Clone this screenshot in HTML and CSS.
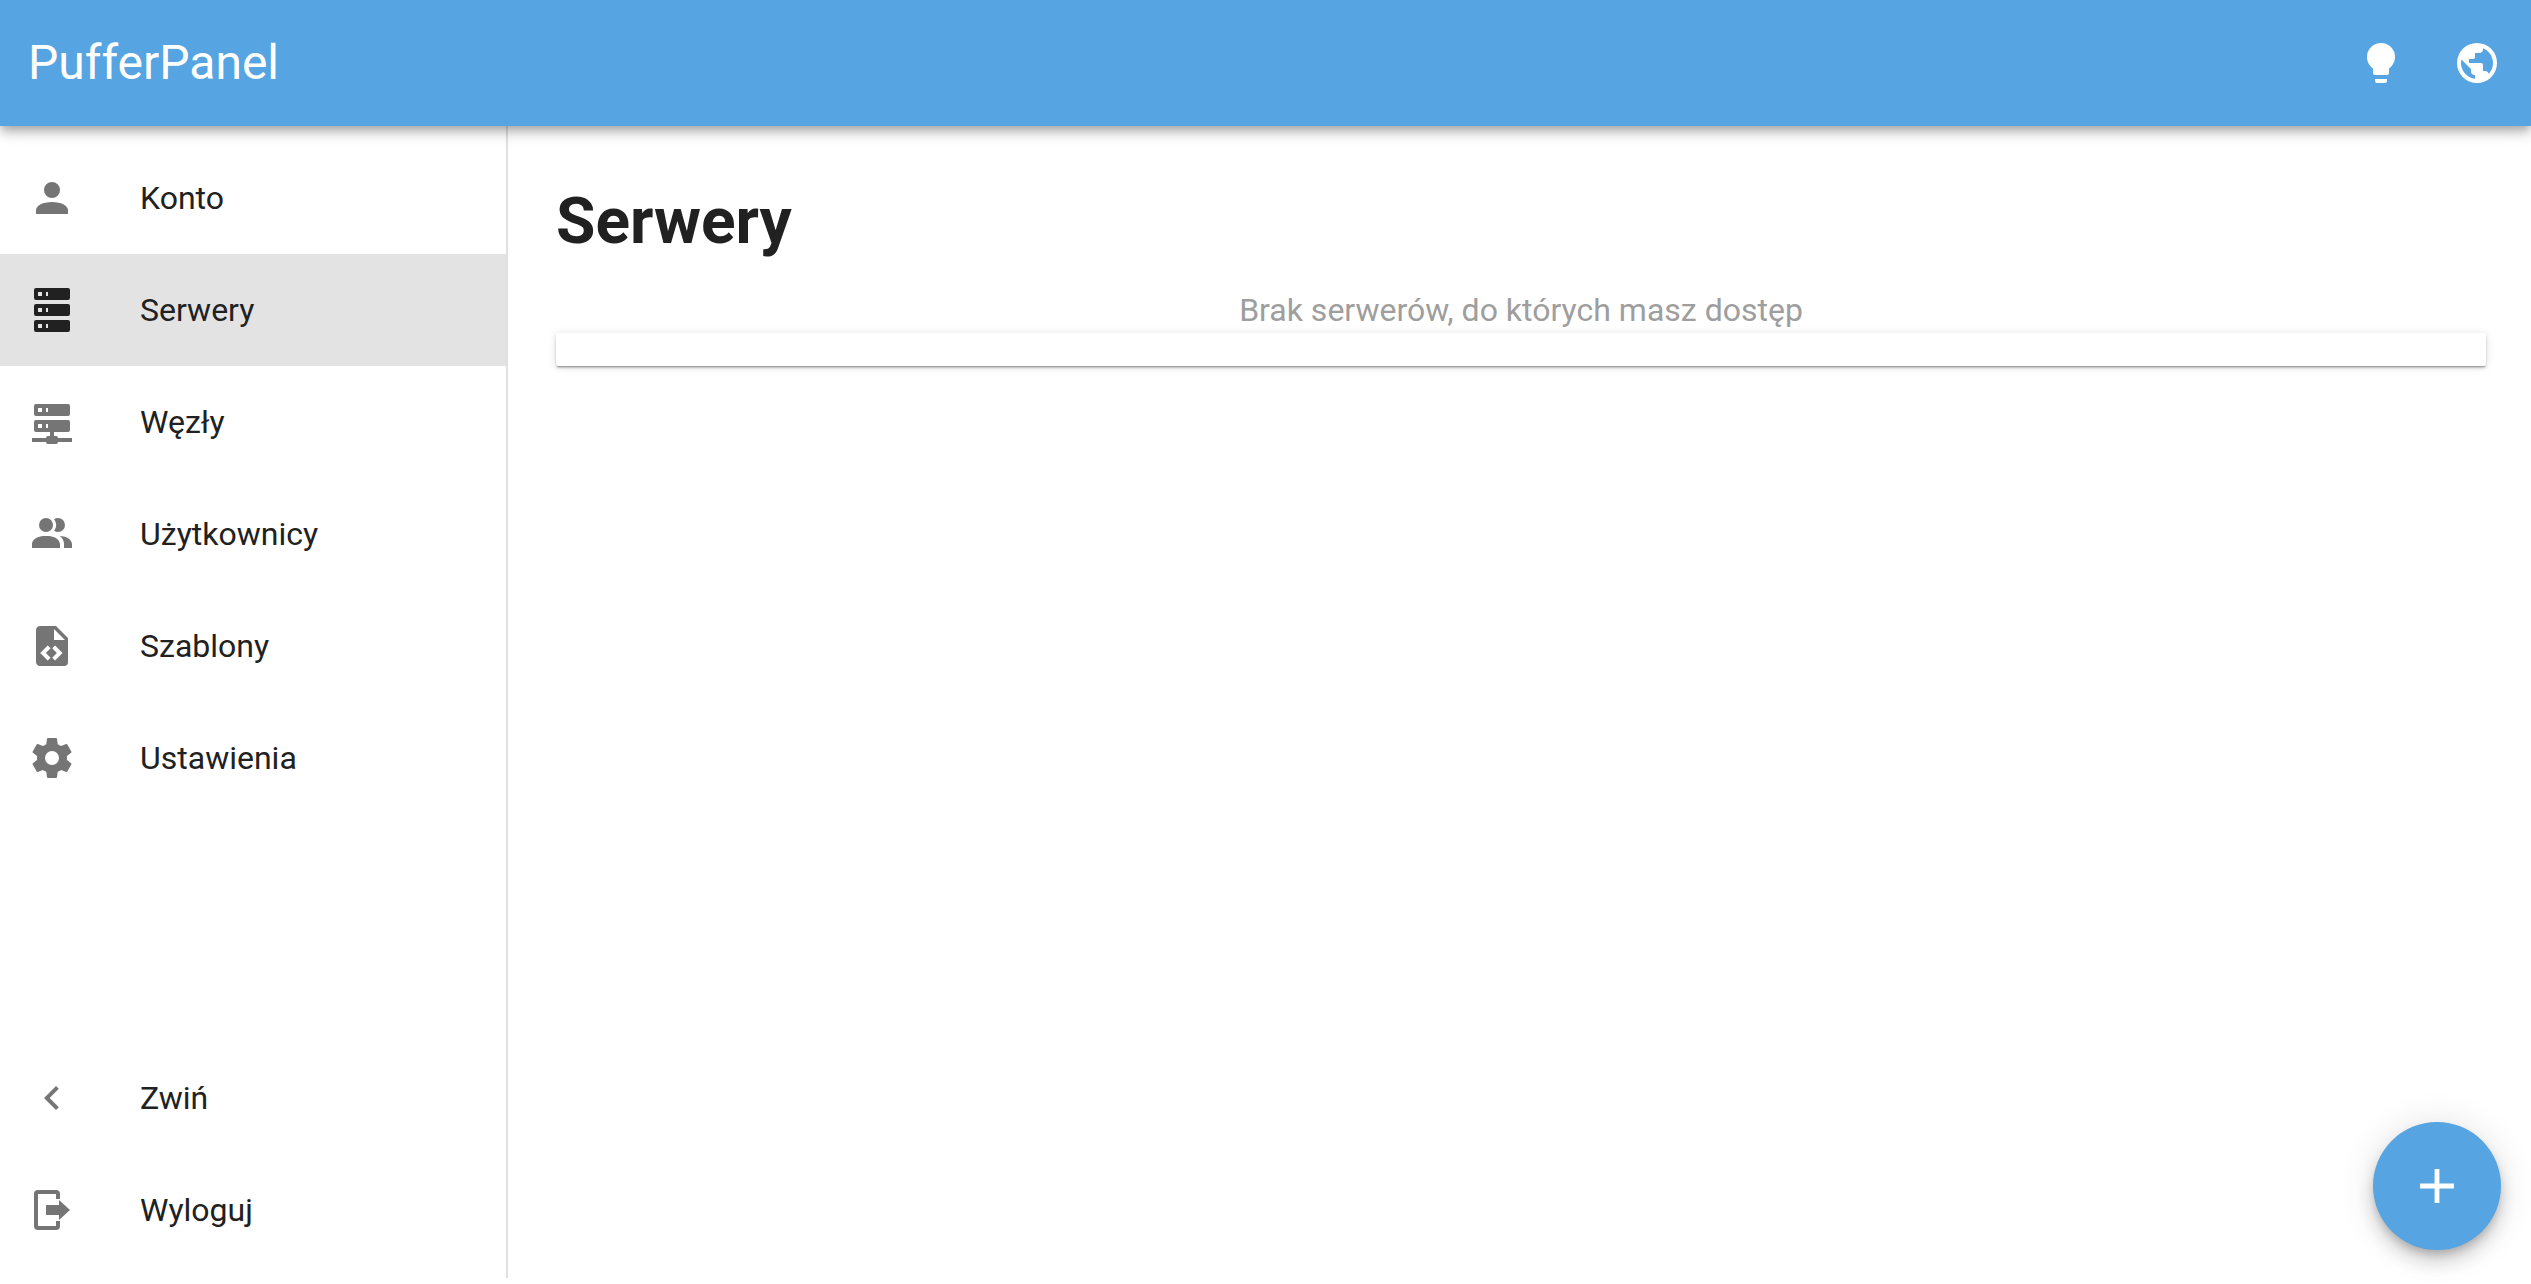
FILE: index.html
```html
<!DOCTYPE html>
<html>
<head>
    <title>PufferPanel</title>
    <link rel="stylesheet" href="styles.css">
</head>
<body>
    <header class="topbar">
        <div class="brand">PufferPanel</div>
        <div class="topbar-icons">
            <svg class="icon" viewBox="0 0 24 24"><path d="M12,2A7,7 0 0,0 5,9C5,11.38 6.19,13.47 8,14.74V17A1,1 0 0,0 9,18H15A1,1 0 0,0 16,17V14.74C17.81,13.47 19,11.38 19,9A7,7 0 0,0 12,2M9,21A1,1 0 0,0 10,22H14A1,1 0 0,0 15,21V20H9V21Z"/></svg>
            <svg class="icon" viewBox="0 0 24 24"><path d="M17.9,17.39C17.64,16.59 16.89,16 16,16H15V13A1,1 0 0,0 14,12H8V10H10A1,1 0 0,0 11,9V7H13A2,2 0 0,0 15,5V4.59C17.93,5.77 20,8.64 20,12C20,14.08 19.2,15.97 17.9,17.39M11,19.93C7.05,19.44 4,16.08 4,12C4,11.38 4.08,10.78 4.21,10.19L9,15V16A2,2 0 0,0 11,18M12,2A10,10 0 0,0 2,12A10,10 0 0,0 12,22A10,10 0 0,0 22,12A10,10 0 0,0 12,2Z"/></svg>
        </div>
    </header>

    <div class="layout">
        <nav class="sidebar">
            <div class="nav-group">
                <a class="nav-item">
                    <svg class="icon" viewBox="0 0 24 24"><path d="M12,4A4,4 0 0,1 16,8A4,4 0 0,1 12,12A4,4 0 0,1 8,8A4,4 0 0,1 12,4M12,14C16.42,14 20,15.79 20,18V20H4V18C4,15.79 7.58,14 12,14Z"/></svg>
                    <span>Konto</span>
                </a>
                <a class="nav-item active">
                    <svg class="icon" viewBox="0 0 24 24"><path d="M4,1H20A1,1 0 0,1 21,2V6A1,1 0 0,1 20,7H4A1,1 0 0,1 3,6V2A1,1 0 0,1 4,1M4,9H20A1,1 0 0,1 21,10V14A1,1 0 0,1 20,15H4A1,1 0 0,1 3,14V10A1,1 0 0,1 4,9M4,17H20A1,1 0 0,1 21,18V22A1,1 0 0,1 20,23H4A1,1 0 0,1 3,22V18A1,1 0 0,1 4,17M9,5H10V3H9V5M9,13H10V11H9V13M9,21H10V19H9V21M5,3V5H7V3H5M5,11V13H7V11H5M5,19V21H7V19H5Z"/></svg>
                    <span>Serwery</span>
                </a>
                <a class="nav-item">
                    <svg class="icon" viewBox="0 0 24 24"><path d="M13,19H14A1,1 0 0,1 15,20H22V22H15A1,1 0 0,1 14,23H10A1,1 0 0,1 9,22H2V20H9A1,1 0 0,1 10,19H11V17H4A1,1 0 0,1 3,16V12A1,1 0 0,1 4,11H20A1,1 0 0,1 21,12V16A1,1 0 0,1 20,17H13V19M4,3H20A1,1 0 0,1 21,4V8A1,1 0 0,1 20,9H4A1,1 0 0,1 3,8V4A1,1 0 0,1 4,3M9,7H10V5H9V7M9,15H10V13H9V15M5,5V7H7V5H5M5,13V15H7V13H5Z"/></svg>
                    <span>Węzły</span>
                </a>
                <a class="nav-item">
                    <svg class="icon" viewBox="0 0 24 24"><path d="M16 17V19H2V17S2 13 9 13 16 17 16 17M12.5 7.5A3.5 3.5 0 1 0 9 11A3.5 3.5 0 0 0 12.5 7.5M15.94 13A5.32 5.32 0 0 1 18 17V19H22V17S22 13.37 15.94 13M15 4A3.39 3.39 0 0 0 13.07 4.59A5 5 0 0 1 13.07 10.41A3.39 3.39 0 0 0 15 11A3.5 3.5 0 0 0 15 4Z"/></svg>
                    <span>Użytkownicy</span>
                </a>
                <a class="nav-item">
                    <svg class="icon" viewBox="0 0 24 24"><path d="M13,9H18.5L13,3.5V9M6,2H14L20,8V20A2,2 0 0,1 18,22H6C4.89,22 4,21.1 4,20V4C4,2.89 4.89,2 6,2M6.12,15.5L9.86,19.24L11.28,17.83L8.95,15.5L11.28,13.17L9.86,11.76L6.12,15.5M17.28,15.5L13.54,11.76L12.12,13.17L14.45,15.5L12.12,17.83L13.54,19.24L17.28,15.5Z"/></svg>
                    <span>Szablony</span>
                </a>
                <a class="nav-item">
                    <svg class="icon" viewBox="0 0 24 24"><path d="M12,15.5A3.5,3.5 0 0,1 8.5,12A3.5,3.5 0 0,1 12,8.5A3.5,3.5 0 0,1 15.5,12A3.5,3.5 0 0,1 12,15.5M19.43,12.97C19.47,12.65 19.5,12.33 19.5,12C19.5,11.67 19.47,11.34 19.43,11L21.54,9.37C21.73,9.22 21.78,8.95 21.66,8.73L19.66,5.27C19.54,5.05 19.27,4.96 19.05,5.05L16.56,6.05C16.04,5.66 15.5,5.32 14.87,5.07L14.5,2.42C14.46,2.18 14.25,2 14,2H10C9.75,2 9.54,2.18 9.5,2.42L9.13,5.07C8.5,5.32 7.96,5.66 7.44,6.05L4.95,5.05C4.73,4.96 4.46,5.05 4.34,5.27L2.34,8.73C2.21,8.95 2.27,9.22 2.46,9.37L4.57,11C4.53,11.34 4.5,11.67 4.5,12C4.5,12.33 4.53,12.65 4.57,12.97L2.46,14.63C2.27,14.78 2.21,15.05 2.34,15.27L4.34,18.73C4.46,18.95 4.73,19.03 4.95,18.95L7.44,17.94C7.96,18.34 8.5,18.68 9.13,18.93L9.5,21.58C9.54,21.82 9.75,22 10,22H14C14.25,22 14.46,21.82 14.5,21.58L14.87,18.93C15.5,18.67 16.04,18.34 16.56,17.94L19.05,18.95C19.27,19.03 19.54,18.95 19.66,18.73L21.66,15.27C21.78,15.05 21.73,14.78 21.54,14.63L19.43,12.97Z"/></svg>
                    <span>Ustawienia</span>
                </a>
            </div>
            <div class="nav-group">
                <a class="nav-item">
                    <svg class="icon" viewBox="0 0 24 24"><path d="M15.41,16.58L10.83,12L15.41,7.41L14,6L8,12L14,18L15.41,16.58Z"/></svg>
                    <span>Zwiń</span>
                </a>
                <a class="nav-item">
                    <svg class="icon" viewBox="0 0 24 24"><path d="M5,2H14A2,2 0 0,1 16,4V6.5H14V4H5V20H14V17.5H16V20A2,2 0 0,1 14,22H5A2,2 0 0,1 3,20V4A2,2 0 0,1 5,2M9,9.5H15.5V7L21,12L15.5,17V14.5H9V9.5Z"/></svg>
                    <span>Wyloguj</span>
                </a>
            </div>
        </nav>

        <main class="content">
            <h1>Serwery</h1>
            <div class="empty-msg">Brak serwerów, do których masz dostęp</div>
            <div class="server-card"></div>
        </main>
    </div>

    <button class="fab">
        <svg class="icon" viewBox="0 0 24 24"><path d="M19,13H13V19H11V13H5V11H11V5H13V11H19V13Z"/></svg>
    </button>
</body>
</html>
```

FILE: styles.css
```css
html, body {
    margin: 0;
    height: 100%;
    background-color: white;
}
body {
    display: flex;
    flex-direction: column;
    font-family: Roboto, sans-serif;
    color: #212121;
    overflow: hidden;
}
.icon {
    display: block;
    width: 48px;
    height: 48px;
    fill: currentColor;
    flex: none;
}
.topbar {
    display: flex;
    align-items: center;
    justify-content: space-between;
    flex: none;
    height: 126px;
    padding: 0 30px 0 28px;
    background-color: #56a4e1;
    color: white;
    position: relative;
    z-index: 2;
    box-shadow: 0 4px 8px -2px rgba(0,0,0,0.2), 0 8px 10px 0 rgba(0,0,0,0.14), 0 2px 20px 0 rgba(0,0,0,0.12);
}
.brand {
    font-size: 48px;
    line-height: 1;
}
.topbar-icons {
    display: flex;
    gap: 48px;
}
.layout {
    display: flex;
    height: 1152px;
    flex: none;
}
.sidebar {
    width: 506px;
    flex: none;
    display: flex;
    flex-direction: column;
    justify-content: space-between;
    border-right: 2px solid #e0e0e0;
    padding: 16px 0 12px;
    box-sizing: content-box;
    height: calc(100% - 28px);
}
.nav-item {
    display: flex;
    align-items: center;
    height: 112px;
    padding-left: 28px;
    gap: 64px;
    font-size: 32px;
    color: #212121;
}
.nav-item .icon {
    color: #757575;
}
.nav-item.active {
    background-color: #e3e3e3;
}
.nav-item.active .icon {
    color: #212121;
}
.content {
    flex: 1;
    padding: 0 45px 0 48px;
}
h1 {
    margin: 0;
    padding-top: 60px;
    font-size: 64px;
    line-height: 72px;
    font-weight: 700;
    color: #212121;
}
.empty-msg {
    margin-top: 34px;
    height: 41px;
    line-height: 37px;
    text-align: center;
    font-size: 32px;
    color: #9e9e9e;
}
.server-card {
    height: 33px;
    background-color: white;
    border-radius: 2px;
    box-shadow: 0 2px 2px -1px rgba(0,0,0,0.35), 0 2px 3px 0 rgba(0,0,0,0.12), 0 1px 8px 0 rgba(0,0,0,0.12);
}
.fab {
    position: fixed;
    left: 2373px;
    top: 1122px;
    display: flex;
    align-items: center;
    justify-content: center;
    width: 128px;
    height: 128px;
    padding: 0;
    border: none;
    border-radius: 50%;
    background-color: #56a4e1;
    color: white;
    box-shadow: 0 6px 10px -2px rgba(0,0,0,0.2), 0 12px 20px 0 rgba(0,0,0,0.14), 0 2px 36px 0 rgba(0,0,0,0.12);
}
.fab .icon {
    width: 58px;
    height: 58px;
}
```
